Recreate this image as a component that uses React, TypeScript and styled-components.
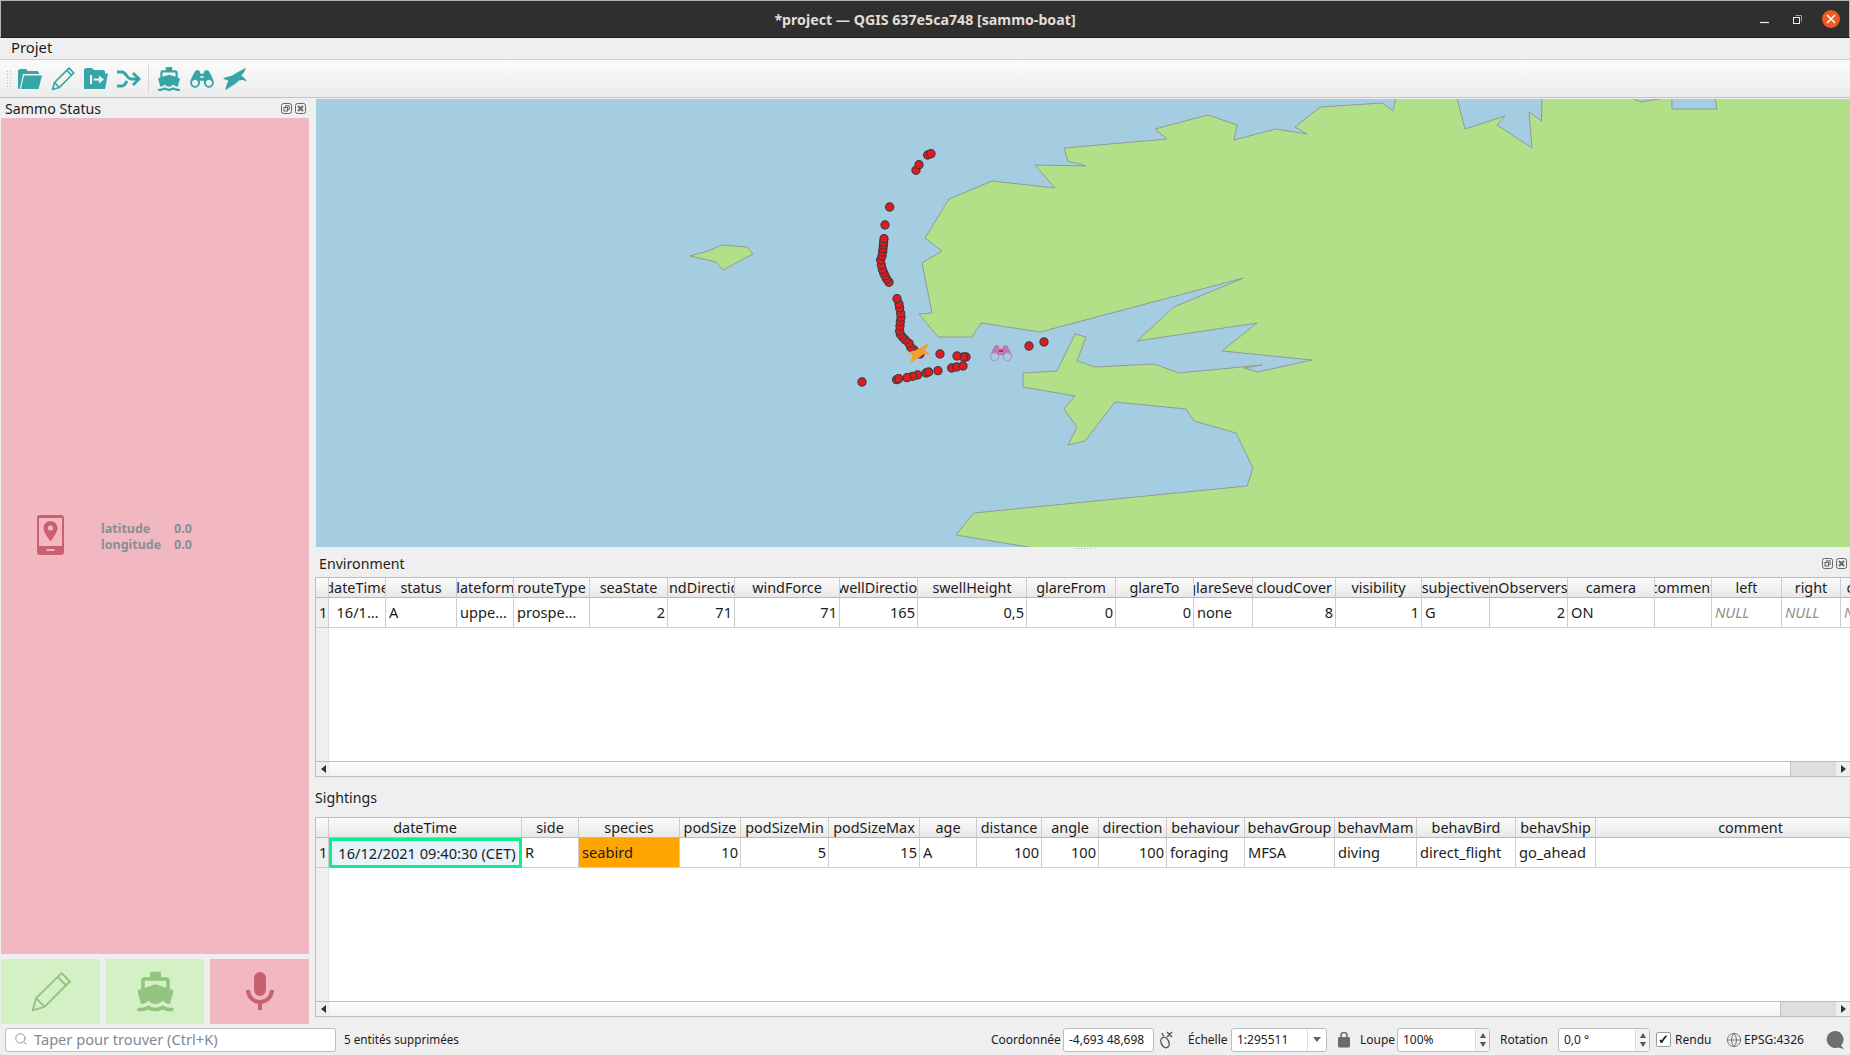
import React from "react";
import styled, { createGlobalStyle } from "styled-components";
import { Search, Globe } from "lucide-react";

const UI_FONT = `"Noto Sans", "Open Sans", sans-serif`;

const GlobalStyle = createGlobalStyle`
  html, body {
    margin: 0;
    padding: 0;
    height: 100%;
    overflow: hidden;
    background: #efefef;
  }
  * {
    box-sizing: border-box;
  }
`;

const Window = styled.div`
  width: 1850px;
  height: 1055px;
  display: flex;
  flex-direction: column;
  overflow: hidden;
  background: #efefef;
  color: #1c1c1c;
  font-family: ${UI_FONT};
  font-size: 14px;
`;

const TitleBar = styled.div`
  flex: 0 0 38px;
  position: relative;
  display: flex;
  align-items: center;
  justify-content: center;
  background: #302f2f;
  border-top: 1px solid #b5b5b5;
  border-left: 1px solid #b5b5b5;
  border-right: 1px solid #b5b5b5;
  border-bottom: 1px solid #1c1c1c;
  color: #e2ded6;
  font-size: 14.2px;
  font-weight: 700;
`;

const WindowButtons = styled.div`
  position: absolute;
  right: 9px;
  top: 9px;
  display: flex;
  align-items: center;
`;

const WindowButton = styled.div<{ $close?: boolean }>`
  width: 33px;
  height: 18px;
  display: flex;
  align-items: center;
  justify-content: center;
  ${(p) => p.$close && `
    width: 18px;
    height: 18px;
    border-radius: 50%;
    background: #ed5a22;
    margin-left: 8px;
  `}
`;

const MenuBar = styled.div`
  flex: 0 0 22px;
  display: flex;
  align-items: center;
  padding: 0 0 2px 11px;
  background: #efefef;
  border-bottom: 1px solid #cfcfcf;
  font-size: 14.8px;
  line-height: 17px;
`;

const Toolbar = styled.div`
  flex: 0 0 38px;
  display: flex;
  align-items: center;
  padding-left: 6px;
  background: linear-gradient(#fbfbfb, #ececec);
  border-bottom: 1px solid #c4c4c4;
`;

const Grip = styled.div`
  width: 5px;
  height: 18px;
  margin-right: 2px;
  background-image: radial-gradient(#bbbbbb 0.7px, transparent 0.8px);
  background-size: 3px 3px;
`;

const ToolButton = styled.div`
  width: 33px;
  height: 30px;
  display: flex;
  align-items: center;
  justify-content: center;
  color: #36a5a6;
`;

const ToolSeparator = styled.div`
  width: 1px;
  height: 28px;
  margin: 0 3px 0 3px;
  background: #d8d8d8;
`;

const Main = styled.div`
  flex: 1;
  min-height: 0;
  display: flex;
  gap: 6px;
  padding-top: 1px;
`;

const LeftDock = styled.div`
  flex: 0 0 309px;
  display: flex;
  flex-direction: column;
  padding-left: 1px;
`;

const DockTitle = styled.div<{ $height: number }>`
  flex: 0 0 ${(p) => p.$height}px;
  display: flex;
  align-items: center;
  justify-content: space-between;
  padding: 0 3px 1px 4px;
  font-size: 14.2px;
  line-height: 17px;
`;

const DockIcons = styled.div`
  display: flex;
  gap: 3px;
`;

const StatusPanel = styled.div`
  flex: 1;
  display: flex;
  align-items: center;
  padding: 0 0 2px 36px;
  background: #f2b8c2;
  color: #c9606f;
`;

const GpsTable = styled.div`
  display: grid;
  grid-template-columns: 73px auto;
  margin-left: 37px;
  margin-top: 3px;
  color: #878f93;
  font-size: 12.5px;
  font-weight: 700;
  line-height: 16px;
`;

const ActionRow = styled.div`
  flex: 0 0 65px;
  margin-top: 5px;
  display: grid;
  grid-template-columns: 99px 98px 99px;
  gap: 6px;
`;

const ActionButton = styled.div<{ $on: boolean }>`
  display: flex;
  align-items: center;
  justify-content: center;
  background: ${(p) => (p.$on ? "#d3f1c4" : "#f2b8c2")};
  color: ${(p) => (p.$on ? "#93c47f" : "#c9606f")};
`;

const RightColumn = styled.div`
  flex: 1;
  min-width: 0;
  display: flex;
  flex-direction: column;
`;

const MapCanvas = styled.svg`
  flex: 0 0 448px;
  display: block;
  width: 1534px;
  height: 448px;
  margin-left: 1px;
  background: #a5cde1;
`;

const Splitter = styled.div`
  flex: 0 0 3px;
  display: flex;
  justify-content: center;
  &::after {
    content: "";
    width: 17px;
    height: 3px;
    background-image: radial-gradient(#b5b5b5 0.7px, transparent 0.8px);
    background-size: 3px 3px;
  }
`;

const TableFrame = styled.div<{ $height: number }>`
  flex: 0 0 ${(p) => p.$height}px;
  display: flex;
  flex-direction: column;
  overflow: hidden;
  background: #fff;
  border: 1px solid #bdbdbd;
  border-right: none;
`;

const GridRow = styled.div<{ $columns: string }>`
  display: grid;
  grid-template-columns: ${(p) => p.$columns};
  flex: none;
  width: max-content;
`;

const HeaderCell = styled.div`
  height: 20px;
  display: flex;
  align-items: center;
  justify-content: center;
  overflow: hidden;
  white-space: nowrap;
  background: linear-gradient(#fbfbfb, #e8e8e8);
  border-right: 1px solid #cdcdcd;
  border-bottom: 1px solid #b9b9b9;
  font-size: 14.4px;
  line-height: 18px;
`;

const Cell = styled.div<{ $align?: string; $bg?: string; $italic?: boolean; $focus?: boolean }>`
  height: 30px;
  display: flex;
  align-items: center;
  justify-content: ${(p) => p.$align ?? "flex-start"};
  overflow: hidden;
  white-space: nowrap;
  padding: 0 2px 2px 3px;
  background: ${(p) => p.$bg ?? "#fff"};
  border-right: 1px solid #cdcdcd;
  border-bottom: 1px solid #cdcdcd;
  font-size: 14.6px;
  ${(p) => p.$italic && "font-style: italic; color: #8f8f8f;"}
  ${(p) => p.$focus && `
    border: 3px solid #0cf08c;
    background: #e8f3fb;
    justify-content: center;
    padding: 0 0 1px 3px;
  `}
`;

const RowNumber = styled.div`
  height: 30px;
  display: flex;
  align-items: center;
  padding: 0 0 2px 3px;
  background: #efefef;
  border-right: 1px solid #cdcdcd;
  border-bottom: 1px solid #cdcdcd;
  font-size: 14.6px;
`;

const TableBody = styled.div`
  flex: 1;
  display: flex;
  background: #fff;
`;

const RowGutter = styled.div`
  width: 13px;
  background: #efefef;
  border-right: 1px solid #e2e2e2;
`;

const ScrollBar = styled.div`
  flex: 0 0 15px;
  display: flex;
  border-top: 1px solid #bdbdbd;
  background: #fff;
`;

const ScrollArrow = styled.div<{ $right?: boolean }>`
  flex: 0 0 14px;
  display: flex;
  align-items: center;
  justify-content: center;
  background: #efefef;
  &::after {
    content: "";
    border-top: 4px solid transparent;
    border-bottom: 4px solid transparent;
    ${(p) => (p.$right ? "border-left: 5px solid #333;" : "border-right: 5px solid #333;")}
  }
`;

const ScrollThumb = styled.div`
  flex: 1;
  background: linear-gradient(#ffffff, #f3f3f3);
  border-right: 1px solid #c4c4c4;
`;

const ScrollTrough = styled.div<{ $width: number }>`
  flex: 0 0 ${(p) => p.$width}px;
  background: #dedede;
`;

const SightingsTitle = styled.div`
  flex: 0 0 40px;
  display: flex;
  align-items: flex-end;
  padding: 0 0 10px 0;
  font-size: 14.2px;
`;

const StatusBar = styled.div`
  flex: 0 0 31px;
  display: flex;
  align-items: center;
  padding: 0 5px;
  background: #efefef;
  font-size: 12px;
`;

const SearchBox = styled.div`
  width: 331px;
  height: 24px;
  display: flex;
  align-items: center;
  gap: 6px;
  padding: 0 0 2px 8px;
  background: #fff;
  border: 1px solid #bdbdbd;
  border-radius: 3px;
  color: #7b8a99;
  font-size: 14.6px;
`;

const StatusMessage = styled.div`
  margin-left: 8px;
  padding-bottom: 1px;
  flex: 1;
  font-size: 11.7px;
`;

const StatusLabel = styled.div<{ $width: number }>`
  width: ${(p) => p.$width}px;
  padding-bottom: 1px;
  white-space: nowrap;
`;

const Field = styled.div<{ $width: number }>`
  width: ${(p) => p.$width}px;
  height: 24px;
  display: flex;
  align-items: center;
  justify-content: space-between;
  padding-left: 5px;
  background: #fff;
  border: 1px solid #bdbdbd;
  border-radius: 3px;
  font-size: 12px;
  white-space: nowrap;
`;

const Stepper = styled.div`
  width: 14px;
  height: 100%;
  display: flex;
  flex-direction: column;
  align-items: center;
  justify-content: center;
  gap: 4px;
  border-left: 1px solid #dcdcdc;
  background: #f4f4f4;
  &::before {
    content: "";
    border-left: 3px solid transparent;
    border-right: 3px solid transparent;
    border-bottom: 5px solid #555;
  }
  &::after {
    content: "";
    border-left: 3px solid transparent;
    border-right: 3px solid transparent;
    border-top: 5px solid #555;
  }
`;

const ComboArrow = styled.div`
  width: 19px;
  height: 100%;
  display: flex;
  align-items: center;
  justify-content: center;
  border-left: 1px solid #dcdcdc;
  &::after {
    content: "";
    border-left: 4px solid transparent;
    border-right: 4px solid transparent;
    border-top: 5px solid #666;
  }
`;

const StatusIcon = styled.div<{ $width: number; $pull?: number }>`
  width: ${(p) => p.$width}px;
  display: flex;
  align-items: center;
  justify-content: flex-start;
  padding-left: ${(p) => p.$pull ?? 3}px;
  color: #6b6b6b;
`;

const CheckBox = styled.div`
  width: 15px;
  height: 15px;
  margin: 0 4px 0 6px;
  display: flex;
  align-items: center;
  justify-content: center;
  background: #fff;
  border: 1px solid #9d9d9d;
  border-radius: 2px;
  font-size: 13px;
  font-weight: 700;
  line-height: 1;
`;

const GlobeSlot = styled.div`
  width: 18px;
  display: flex;
  align-items: center;
`;

const FERRY =
  "M6,6H18V9.96L12,8L6,9.96M3.94,19H4C5.6,19 7,18.12 8,17C9,18.12 10.4,19 12,19C13.6,19 15,18.12 16,17C17,18.12 18.4,19 20,19H20.05L21.95,12.31C22.03,12.06 22,11.78 21.89,11.54C21.76,11.3 21.55,11.12 21.29,11.04L20,10.62V6C20,4.89 19.1,4 18,4H15V1H9V4H6A2,2 0 0,0 4,6V10.62L2.71,11.04C2.45,11.12 2.24,11.3 2.11,11.54C2,11.78 1.97,12.06 2.05,12.31M20,21C18.61,21 17.22,20.53 16,19.67C13.56,21.38 10.44,21.38 8,19.67C6.78,20.53 5.39,21 4,21H2V23H4C5.37,23 6.74,22.65 8,22C10.5,23.3 13.5,23.3 16,22C17.26,22.65 18.62,23 20,23H22V21H20Z";
const BINOCULARS_BODY =
  "M16 2C20 0 26 0 29 4L31 11H40L42 4C45 0 51 0 55 2C60 10 66 20 70 34A14.5 14.5 0 1 1 41.500 38L41 32H30L29.500 38A14.500 14.500 0 1 1 1 34C5 20 11 10 16 2ZM30 18H41V23H30Z";
const BINOCULARS = `${BINOCULARS_BODY}M15 29A9 9 0 1 0 15.01 29ZM56 29A9 9 0 1 0 56.01 29Z`;
const BINOCULARS_THIN = `${BINOCULARS_BODY}M15 26A12 12 0 1 0 15.01 26ZM56 26A12 12 0 1 0 56.01 26Z`;
const BIRD =
  "M0 32C8 25 20 27 30 21C42 13 55 5 68 0C65 10 60 16 54 22C61 27 67 32 71 40C62 35 54 34 47 37C40 44 33 50 26 53C20 56 14 62 7 65C9 54 12 46 16 38C10 36 5 34 0 32Z";
const MIC =
  "M12,2A3,3 0 0,1 15,5V11A3,3 0 0,1 12,14A3,3 0 0,1 9,11V5A3,3 0 0,1 12,2M19,11C19,14.53 16.39,17.44 13,17.93V21H11V17.93C7.61,17.44 5,14.53 5,11H7A5,5 0 0,0 12,16A5,5 0 0,0 17,11H19Z";
const LOCK =
  "M18,8A2,2 0 0,1 20,10V20A2,2 0 0,1 18,22H6A2,2 0 0,1 4,20V10C4,8.89 4.9,8 6,8H7V6A5,5 0 0,1 12,1A5,5 0 0,1 17,6V8H18M12,3A3,3 0 0,0 9,6V8H15V6A3,3 0 0,0 12,3Z";

const FolderIcon = () => (
  <svg width="24" height="20" viewBox="0 0 24 20" fill="currentColor">
    <path d="M0 2.5C0 1 1 0 2.5 0H8L10 2H19C20 2 21 3 21 4V5H5L1.8 20H1C.4 20 0 19.5 0 19Z" />
    <path d="M6 6.5H24L20.5 20H3Z" />
  </svg>
);

const PencilIcon = ({ size, weight }: { size: number; weight: number }) => (
  <svg width={size} height={size} viewBox="0 0 24 24" fill="none" stroke="currentColor" strokeWidth={weight} strokeLinejoin="round">
    <path d="M1.5 22.5L3.5 15.5L18 1.2L22.8 6L8.3 20.5Z" />
    <path d="M3.5 15.5L8.3 20.5M15.8 3.4L20.6 8.2" />
  </svg>
);

const FolderMoveIcon = () => (
  <svg width="24" height="21" viewBox="0 0 24 21">
    <path fill="currentColor" d="M0 2.5C0 1 1 0 2.5 0H8L10 2H19C20 2 21 3 21 4V5.5H24L21 21H1C.4 21 0 20.5 0 20Z" />
    <path fill="#f6f6f6" d="M6 7H8V16H6ZM9.5 10.5H15V7.5L20 11.5L15 15.5V12.5H9.5Z" />
  </svg>
);

const MergeIcon = () => (
  <svg width="24" height="20" viewBox="0 0 24 20" fill="none" stroke="currentColor" strokeWidth="3">
    <path d="M0 3H5C9 3 10 10 14 10H21" />
    <path d="M0 17H5C8 17 9 13.5 10 12" />
    <path d="M16 4L22 10L16 16" />
  </svg>
);

const FilledIcon = ({ d, width, height, box, rule }: { d: string; width: number; height: number; box: string; rule?: "evenodd" }) => (
  <svg width={width} height={height} viewBox={box} fill="currentColor" fillRule={rule}>
    <path d={d} />
  </svg>
);

const PhoneIcon = () => (
  <svg width="27" height="40" viewBox="0 0 27 40">
    <rect width="27" height="40" rx="3" fill="#c9606f" />
    <rect x="2" y="3" width="23" height="28" fill="#f2b8c2" />
    <path fill="#c9606f" d="M13.5 6A7 7 0 0 1 20.5 13C20.5 17 16 23 13.5 26.5C11 23 6.500 17 6.500 13A7 7 0 0 1 13.500 6Z" />
    <circle cx="13.5" cy="13" r="2.6" fill="#f2b8c2" />
    <rect x="9.500" y="34" width="8" height="2" fill="#f2b8c2" />
  </svg>
);

const FloatIcon = () => (
  <svg width="11" height="11" viewBox="0 0 11 11" fill="none" stroke="#666">
    <rect x=".5" y=".5" width="10" height="10" rx="2" />
    <rect x="3" y="4.500" width="3.500" height="3.500" />
    <path d="M4.500 4.500V2.800H8.200V6.500H6.500" />
  </svg>
);

const CloseIcon = () => (
  <svg width="11" height="11" viewBox="0 0 11 11" fill="none" stroke="#666">
    <rect x=".5" y=".5" width="10" height="10" rx="2" />
    <path d="M3 3L8 8M8 3L3 8" strokeWidth="1.800" />
  </svg>
);

const MouseIcon = () => (
  <svg width="18" height="18" viewBox="0 0 18 18" fill="none" stroke="#555" strokeWidth="1.400">
    <ellipse cx="8" cy="11.500" rx="3.800" ry="5.500" transform="rotate(-25 8 11.500)" />
    <path d="M10 1L15 6M15 1L10 6M6.500 5L5 2" />
  </svg>
);

const BubbleIcon = () => (
  <svg width="20" height="20" viewBox="0 0 20 20" fill="#6f6f6f">
    <path d="M10 1A8.500 8.500 0 0 1 16 15.500L19 19L13 17.500A8.500 8.500 0 1 1 10 1Z" />
  </svg>
);

const land =
  "1064,148 1167,139 1155,129 1208,115 1237,125 1234,140 1275.500,129 1307,134 1295,127 1320.500,107 1382.500,103 1393,111 1396,98 1457,98 1465,129 1505,116 1497,125 1532,148 1529,112 1541.500,121 1542,98 1631,98 1641,102 1664,98 1672,98 1672,109 1717,109 1715,98 1852,98 1852,549 1040,549 956,535 974,513 1247,486 1253,468 1236,433 1194,421 1186,409 1115,402 1085,441 1068,445 1077,427 1064,409 1075,396 1023,387 1023,373 1057,371 1075,334 1086,337 1077,361 1095,367 1154,364 1179,373 1262,365 1244,368 1258,372 1312,360 1222,351 1257,323 1137,341 1174,307 1243.500,278 1040,332 981,323 972,337 938,337 919,314 932,313 922,263 942,251 925,238 949,199 992,181 1055,188 1035,165 1086,166 1068,161";
const island = "690,256 708,251 722,245 747,247 753,254 723,270 716,262";

// sighting points, read off a 3x crop starting at x=820 y=130
const points: [number, number][] = [
  [323, 75], [333, 71], [288, 121], [297, 104], [209, 231], [195, 285], [207, 457], [200, 447], [195, 437], [191, 428], [187, 418], [184, 405],
  [182, 390], [186, 378], [188, 366], [189, 356], [190, 346], [191, 337], [192, 326], [300, 672], [282, 660], [272, 652], [267, 640], [256, 630], [248, 622],
  [241, 613], [239, 603], [240, 588], [241, 575], [243, 562], [242, 550], [239, 534], [237, 522], [231, 506], [360, 672], [438, 681], [430, 681], [411, 678],
  [395, 714], [410, 711], [429, 708], [354, 722], [318, 729], [326, 726], [293, 735], [278, 739], [261, 743], [230, 749], [236, 746], [126, 756], [627, 648], [672, 636],
];

const MapView = () => (
  <MapCanvas viewBox="316 99 1534 448">
    <polygon points={land} fill="#b2e089" stroke="#939a93" strokeWidth="1" />
    <polygon points={island} fill="#b2e089" stroke="#939a93" strokeWidth="1" />
    {points.map(([x, y], i) => (
      <circle key={i} cx={820 + x / 3} cy={130 + y / 3} r="4.100" fill="#e3191f" stroke="#3a3a3a" strokeWidth="1.100" />
    ))}
    <g transform="translate(908 343) scale(0.31)" fill="#f0a02c">
      <path d={BIRD} />
    </g>
    <g transform="translate(990 345) scale(0.31)" fill="#b57bb6" fillRule="evenodd">
      <path d={BINOCULARS_THIN} />
    </g>
    <rect x="999" y="350" width="4" height="2" fill="#e3191f" />
  </MapCanvas>
);

interface Column {
  name: string;
  end: number;
  value?: string;
  align?: string;
  bg?: string;
  italic?: boolean;
  focus?: boolean;
}

const R = "flex-end";

const environment: Column[] = [
  { name: "dateTime", end: 386, value: "16/1…", align: "center" },
  { name: "status", end: 457, value: "A" },
  { name: "plateforme", end: 514, value: "uppe…" },
  { name: "routeType", end: 590, value: "prospe…" },
  { name: "seaState", end: 668, value: "2", align: R },
  { name: "windDirection", end: 735, value: "71", align: R },
  { name: "windForce", end: 840, value: "71", align: R },
  { name: "swellDirection", end: 918, value: "165", align: R },
  { name: "swellHeight", end: 1027, value: "0,5", align: R },
  { name: "glareFrom", end: 1116, value: "0", align: R },
  { name: "glareTo", end: 1194, value: "0", align: R },
  { name: "glareSever", end: 1253, value: "none" },
  { name: "cloudCover", end: 1336, value: "8", align: R },
  { name: "visibility", end: 1422, value: "1", align: R },
  { name: "subjective", end: 1490, value: "G" },
  { name: "nObservers", end: 1568, value: "2", align: R },
  { name: "camera", end: 1655, value: "ON" },
  { name: "comment", end: 1712, value: "" },
  { name: "left", end: 1782, value: "NULL", italic: true },
  { name: "right", end: 1841, value: "NULL", italic: true },
  { name: "center", end: 1896, value: "NULL", italic: true },
];

const sightings: Column[] = [
  { name: "dateTime", end: 522, value: "16/12/2021 09:40:30 (CET)", focus: true },
  { name: "side", end: 579, value: "R" },
  { name: "species", end: 680, value: "seabird", bg: "#ffa500" },
  { name: "podSize", end: 741, value: "10", align: R },
  { name: "podSizeMin", end: 829, value: "5", align: R },
  { name: "podSizeMax", end: 920, value: "15", align: R },
  { name: "age", end: 977, value: "A" },
  { name: "distance", end: 1042, value: "100", align: R },
  { name: "angle", end: 1099, value: "100", align: R },
  { name: "direction", end: 1167, value: "100", align: R },
  { name: "behaviour", end: 1245, value: "foraging" },
  { name: "behavGroup", end: 1335, value: "MFSA" },
  { name: "behavMam", end: 1417, value: "diving" },
  { name: "behavBird", end: 1516, value: "direct_flight" },
  { name: "behavShip", end: 1596, value: "go_ahead" },
  { name: "comment", end: 1906, value: "" },
];

const AttributeTable = ({ columns, height, trough }: { columns: Column[]; height: number; trough: number }) => {
  const template = ["13px"]
    .concat(columns.map((c, i) => `${c.end - (i === 0 ? 329 : columns[i - 1].end)}px`))
    .join(" ");
  return (
    <TableFrame $height={height}>
      <GridRow $columns={template}>
        <HeaderCell />
        {columns.map((c) => (
          <HeaderCell key={c.name}>{c.name}</HeaderCell>
        ))}
      </GridRow>
      <GridRow $columns={template}>
        <RowNumber>1</RowNumber>
        {columns.map((c) => (
          <Cell key={c.name} $align={c.align} $bg={c.bg} $italic={c.italic} $focus={c.focus}>
            {c.value}
          </Cell>
        ))}
      </GridRow>
      <TableBody>
        <RowGutter />
      </TableBody>
      <ScrollBar>
        <ScrollArrow />
        <ScrollThumb />
        <ScrollTrough $width={trough} />
        <ScrollArrow $right />
      </ScrollBar>
    </TableFrame>
  );
};

const App: React.FC = () => {
  return (
    <Window>
      <GlobalStyle />
      <TitleBar>
        *project — QGIS 637e5ca748 [sammo-boat]
        <WindowButtons>
          <WindowButton>
            <svg width="9" height="9" viewBox="0 0 9 9" stroke="#eee" strokeWidth="1.200">
              <path d="M0 7.500H9" />
            </svg>
          </WindowButton>
          <WindowButton>
            <svg width="9" height="9" viewBox="0 0 9 9" fill="none" stroke="#eee">
              <rect x=".5" y="2.500" width="6" height="6" />
              <path d="M2.500 .5H8.500V6.500" stroke="#999" />
            </svg>
          </WindowButton>
          <WindowButton $close>
            <svg width="10" height="10" viewBox="0 0 10 10" stroke="#fff" strokeWidth="1.500">
              <path d="M1 1L9 9M9 1L1 9" />
            </svg>
          </WindowButton>
        </WindowButtons>
      </TitleBar>
      <MenuBar>Projet</MenuBar>
      <Toolbar>
        <Grip />
        <ToolButton>
          <FolderIcon />
        </ToolButton>
        <ToolButton>
          <PencilIcon size={24} weight={1.700} />
        </ToolButton>
        <ToolButton>
          <FolderMoveIcon />
        </ToolButton>
        <ToolButton>
          <MergeIcon />
        </ToolButton>
        <ToolSeparator />
        <ToolButton>
          <FilledIcon d={FERRY} width={26} height={26} box="0 0 24 24" />
        </ToolButton>
        <ToolButton>
          <FilledIcon d={BINOCULARS} width={24} height={18} box="0 0 71 53" rule="evenodd" />
        </ToolButton>
        <ToolButton>
          <FilledIcon d={BIRD} width={24} height={22} box="0 0 71 65" />
        </ToolButton>
      </Toolbar>
      <Main>
        <LeftDock>
          <DockTitle $height={19}>
            Sammo Status
            <DockIcons>
              <FloatIcon />
              <CloseIcon />
            </DockIcons>
          </DockTitle>
          <StatusPanel>
            <PhoneIcon />
            <GpsTable>
              <span>latitude</span>
              <span>0.0</span>
              <span>longitude</span>
              <span>0.0</span>
            </GpsTable>
          </StatusPanel>
          <ActionRow>
            <ActionButton $on>
              <PencilIcon size={42} weight={1.100} />
            </ActionButton>
            <ActionButton $on>
              <FilledIcon d={FERRY} width={43} height={43} box="0 0 24 24" />
            </ActionButton>
            <ActionButton $on={false}>
              <FilledIcon d={MIC} width={48} height={48} box="0 0 24 24" />
            </ActionButton>
          </ActionRow>
        </LeftDock>
        <RightColumn>
          <MapView />
          <Splitter />
          <DockTitle $height={27}>
            Environment
            <DockIcons>
              <FloatIcon />
              <CloseIcon />
            </DockIcons>
          </DockTitle>
          <AttributeTable columns={environment} height={200} trough={45} />
          <SightingsTitle>Sightings</SightingsTitle>
          <AttributeTable columns={sightings} height={200} trough={55} />
        </RightColumn>
      </Main>
      <StatusBar>
        <SearchBox>
          <Search size={14} strokeWidth={1.500} color="#8a8a8a" />
          Taper pour trouver (Ctrl+K)
        </SearchBox>
        <StatusMessage>5 entités supprimées</StatusMessage>
        <StatusLabel $width={72}>Coordonnée</StatusLabel>
        <Field $width={91}>-4,693 48,698</Field>
        <StatusIcon $width={34}>
          <MouseIcon />
        </StatusIcon>
        <StatusLabel $width={43}>Échelle</StatusLabel>
        <Field $width={96}>
          1:295511
          <ComboArrow />
        </Field>
        <StatusIcon $width={33} $pull={8}>
          <FilledIcon d={LOCK} width={18} height={18} box="0 0 24 24" />
        </StatusIcon>
        <StatusLabel $width={37}>Loupe</StatusLabel>
        <Field $width={93}>
          100%
          <Stepper />
        </Field>
        <StatusIcon $width={10} />
        <StatusLabel $width={58}>Rotation</StatusLabel>
        <Field $width={92}>
          0,0 °
          <Stepper />
        </Field>
        <CheckBox>✓</CheckBox>
        <StatusLabel $width={51}>Rendu</StatusLabel>
        <GlobeSlot>
          <Globe size={16} strokeWidth={1.300} color="#666" />
        </GlobeSlot>
        <StatusLabel $width={81}>EPSG:4326</StatusLabel>
        <BubbleIcon />
      </StatusBar>
    </Window>
  );
};

export default App;
